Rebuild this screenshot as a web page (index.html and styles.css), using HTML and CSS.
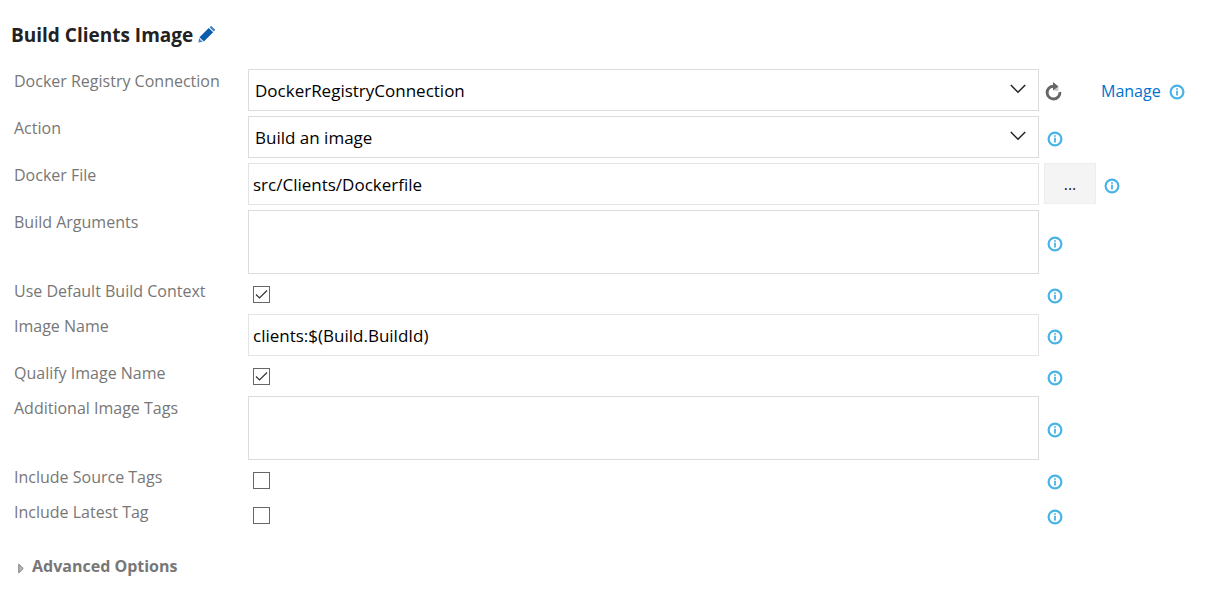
FILE: index.html
```html
<!DOCTYPE html>
<html lang="en">
<head>
<meta charset="utf-8">
<title>Build Clients Image</title>
<link rel="stylesheet" href="styles.css">
</head>
<body>
<svg class="sprite" aria-hidden="true">
  <symbol id="info" viewBox="0 0 16 16">
    <circle cx="8" cy="8" r="6.4" fill="none" stroke="#48b3e7" stroke-width="2.2"/>
    <path d="M7.1 4.3h1.8v1.5H7.1zM7.1 6.8h1.8v4.7H7.1z" fill="#48b3e7"/>
  </symbol>
  <symbol id="chevron" viewBox="0 0 16 10">
    <path d="M.8 1 8 8.2 15.2 1" fill="none" stroke="#222" stroke-width="1.5"/>
  </symbol>
</svg>
<main class="task">
  <header class="title-bar">
    <h1 class="title">Build Clients Image</h1>
    <button class="icon-button" type="button" aria-label="Rename">
      <svg class="pencil" viewBox="0 0 18 18">
        <path d="M1.6 11.9 11.4 2.1l4.6 4.6-9.8 9.8z" fill="#0a5cad"/>
        <path d="m12.3 1.4 1-1c.4-.4.9-.4 1.3 0l3.1 3.1c.4.4.4.9 0 1.3l-1 1z" fill="#3c7fc0"/>
        <path d="M1.3 13.1.4 17.6l4.5-.9-.9-1.2-1.4-.3-.2-1.4z" fill="#3c7fc0"/>
      </svg>
    </button>
  </header>
  <form class="form">
    <div class="row">
      <label class="label" for="connection">Docker Registry Connection</label>
      <div class="picker">
        <select class="field select" id="connection"><option>DockerRegistryConnection</option></select>
        <svg class="chevron"><use href="#chevron"/></svg>
      </div>
      <div class="aside">
        <button class="icon-button refresh-button" type="button" aria-label="Refresh">
          <svg class="refresh" viewBox="0 0 17 19">
            <path d="M8.6 4.2A6.4 6.4 0 1 0 14.9 10" fill="none" stroke="#666" stroke-width="2.9"/>
            <path d="M8 0 13.5 4.6 8 8.6z" fill="#666"/>
            <path d="M9.6 4.8h3.8v4.1H9.6z" fill="#666" opacity=".35"/>
          </svg>
        </button>
        <a class="manage" href="#manage">Manage</a>
        <svg class="info" role="img" aria-label="Info"><use href="#info"/></svg>
      </div>
    </div>
    <div class="row">
      <label class="label" for="action">Action</label>
      <div class="picker">
        <select class="field select" id="action"><option>Build an image</option></select>
        <svg class="chevron"><use href="#chevron"/></svg>
      </div>
      <div class="aside"><svg class="info" role="img" aria-label="Info"><use href="#info"/></svg></div>
    </div>
    <div class="row">
      <label class="label" for="file">Docker File</label>
      <input class="field text" id="file" type="text" value="src/Clients/Dockerfile">
      <div class="aside">
        <button class="browse" type="button" aria-label="Browse">...</button>
        <svg class="info" role="img" aria-label="Info"><use href="#info"/></svg>
      </div>
    </div>
    <div class="row">
      <label class="label" for="arguments">Build Arguments</label>
      <textarea class="field area" id="arguments"></textarea>
      <div class="aside"><svg class="info" role="img" aria-label="Info"><use href="#info"/></svg></div>
    </div>
    <div class="row">
      <label class="label" for="context">Use Default Build Context</label>
      <div class="check"><input class="box" id="context" type="checkbox" checked></div>
      <div class="aside"><svg class="info" role="img" aria-label="Info"><use href="#info"/></svg></div>
    </div>
    <div class="row">
      <label class="label" for="image">Image Name</label>
      <input class="field text" id="image" type="text" value="clients:$(Build.BuildId)">
      <div class="aside"><svg class="info" role="img" aria-label="Info"><use href="#info"/></svg></div>
    </div>
    <div class="row">
      <label class="label" for="qualify">Qualify Image Name</label>
      <div class="check"><input class="box" id="qualify" type="checkbox" checked></div>
      <div class="aside"><svg class="info" role="img" aria-label="Info"><use href="#info"/></svg></div>
    </div>
    <div class="row">
      <label class="label" for="tags">Additional Image Tags</label>
      <textarea class="field area" id="tags"></textarea>
      <div class="aside"><svg class="info" role="img" aria-label="Info"><use href="#info"/></svg></div>
    </div>
    <div class="row">
      <label class="label" for="source">Include Source Tags</label>
      <div class="check"><input class="box" id="source" type="checkbox"></div>
      <div class="aside"><svg class="info" role="img" aria-label="Info"><use href="#info"/></svg></div>
    </div>
    <div class="row">
      <label class="label" for="latest">Include Latest Tag</label>
      <div class="check"><input class="box" id="latest" type="checkbox"></div>
      <div class="aside"><svg class="info" role="img" aria-label="Info"><use href="#info"/></svg></div>
    </div>
  </form>
  <button class="advanced" type="button" aria-expanded="false">
    <svg class="triangle" viewBox="0 0 6 11"><path d="M.8 1.2 5.2 5.5.8 9.8z" fill="#bbb" stroke="#777"/></svg>
    Advanced Options
  </button>
</main>
</body>
</html>
```
FILE: styles.css
```css
* { box-sizing: border-box; }
body {
  margin: 0;
  background: #fff;
  color: #000;
  font-family: "Open Sans", "Noto Sans", sans-serif;
  font-size: 16px;
}
button, input, select, textarea { font: inherit; color: inherit; margin: 0; }
svg { display: block; flex: none; }
.sprite { position: absolute; width: 0; height: 0; }
.task { padding: 20px 0 20px 11px; }
.title-bar { display: flex; align-items: center; gap: 5px; height: 30px; }
.title { margin: 0; font-size: 19px; line-height: 30px; font-weight: 700; color: #222; }
.icon-button { padding: 0; border: 0; background: none; }
.pencil { width: 17px; height: 17px; margin-bottom: 2px; }
.form { display: flex; flex-direction: column; gap: 5px; margin-top: 19px; }
.row { display: grid; grid-template-columns: 237px 1fr 175px; }
.label { padding-left: 3px; line-height: 24px; color: #777; }
.field {
  display: block;
  width: 100%;
  height: 42px;
  border: 1px solid #dcdcdc;
  border-radius: 0;
  background: #fff;
  font-size: 17px;
}
.picker { position: relative; }
.select { appearance: none; padding: 0 36px 0 6px; }
.chevron { position: absolute; right: 13px; top: 15px; width: 16px; height: 10px; pointer-events: none; }
.text { padding: 0 4px; border-color: #e4e4e4; }
.area { height: 64px; padding: 4px; resize: none; }
.check { display: flex; align-items: center; height: 30px; padding-left: 5px; }
.box {
  appearance: none;
  width: 17px;
  height: 17px;
  border: 1px solid #666;
  background: #fff;
}
.box:checked {
  background: url("data:image/svg+xml,%3Csvg xmlns='http://www.w3.org/2000/svg' viewBox='0 0 15 15'%3E%3Cpath d='M2 7.5 5.5 11 13 3.5' fill='none' stroke='%23333' stroke-width='1.2'/%3E%3C/svg%3E") center / 15px 15px no-repeat;
}
.aside { display: flex; align-items: center; gap: 8px; padding: 3px 0 0 8px; }
.info { width: 16px; height: 16px; }
.refresh-button { margin: 0 31px 0 -2px; }
.refresh { width: 17px; height: 19px; }
.manage { color: #0072d0; font-size: 16px; text-decoration: none; padding-bottom: 2px; }
.browse {
  width: 52px;
  height: 41px;
  margin: -4px 0 0 -3px;
  padding: 0;
  border: 1px solid #eee;
  background: #f4f4f4;
  color: #222;
}
.advanced {
  display: flex;
  align-items: center;
  gap: 8px;
  margin: 24px 0 0 7px;
  padding: 0;
  border: 0;
  background: none;
  color: #777;
  font-weight: 700;
  line-height: 24px;
}
.triangle { width: 6px; height: 11px; margin-top: 4px; }
```
